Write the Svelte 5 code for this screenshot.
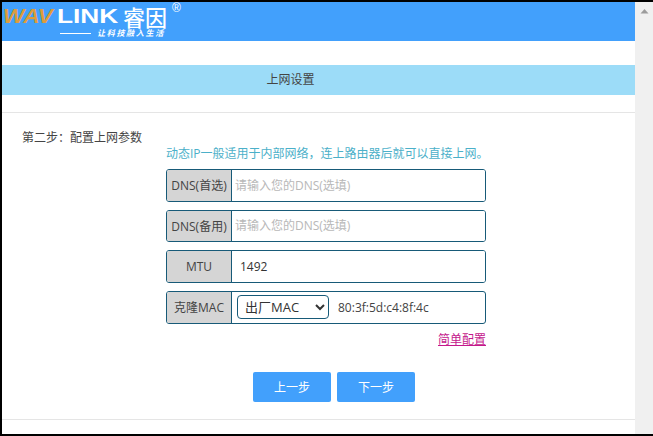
<script lang="ts">
  const fields = [
    { label: 'DNS(首选)', placeholder: '请输入您的DNS(选填)', value: '' },
    { label: 'DNS(备用)', placeholder: '请输入您的DNS(选填)', value: '' },
    { label: 'MTU', placeholder: '', value: '1492' }
  ]
</script>

<div class="frame">
  <main class="page">
    <header class="top">
      <div class="logo">
        <div class="brand"><span class="wav">WAV</span><span class="link">LINK</span><span class="cn">睿因</span><span class="reg">®</span></div>
        <div class="slogan"><span class="dash"></span><span>让科技融入生活</span></div>
      </div>
    </header>

    <div class="title">上网设置</div>

    <section class="content">
      <div class="step">第二步：配置上网参数</div>
      <div class="form">
        <p class="hint">动态IP一般适用于内部网络，连上路由器后就可以直接上网。</p>
        {#each fields as f}
          <div class="row">
            <span class="label">{f.label}</span>
            <input class="text" placeholder={f.placeholder} value={f.value} />
          </div>
        {/each}
        <div class="row">
          <span class="label">克隆MAC</span>
          <div class="mac">
            <select>
              <option>出厂MAC</option>
            </select>
            <span class="addr">80:3f:5d:c4:8f:4c</span>
          </div>
        </div>
        <div class="simple"><a href="#simple">简单配置</a></div>
      </div>
    </section>

    <div class="actions">
      <button>上一步</button>
      <button>下一步</button>
    </div>
  </main>

  <aside class="scroll">
    <svg width="9" height="6" viewBox="0 0 9 6"><path d="M0.5 5.5 4.5 1l4 4.5z" fill="#9c9c9c" /></svg>
  </aside>
</div>

<style>
  :global(body) {
    margin: 0;
    background: #fff;
  }

  .frame {
    box-sizing: border-box;
    width: 653px;
    height: 436px;
    display: flex;
    border-top: 2px solid #000;
    border-left: 2px solid #000;
    border-bottom: 2px solid #000;
    font-family: "Open Sans", "Noto Sans CJK SC", sans-serif;
    font-size: 12px;
    color: #444;
    overflow: hidden;
  }

  .page {
    width: 633px;
    flex-shrink: 0;
    display: flex;
    flex-direction: column;
  }

  .scroll {
    flex: 1;
    background: #f0f0f0;
    display: flex;
    justify-content: center;
    align-items: flex-start;
    padding-top: 6px;
  }

  .top {
    height: 39px;
    background: #42a0fc;
    flex-shrink: 0;
  }

  .logo {
    padding: 2px 0 0 1px;
    color: #fff;
  }

  .brand {
    display: flex;
    align-items: center;
    height: 24px;
    font-family: "Liberation Sans", sans-serif;
    font-weight: 700;
    font-size: 21px;
    line-height: 24px;
  }

  .wav {
    width: 54px;
    flex-shrink: 0;
    color: #dd9c3c;
    font-style: italic;
    transform: scaleX(1.08);
    transform-origin: left;
  }

  .link {
    width: 66px;
    flex-shrink: 0;
    transform: scaleX(1.25);
    transform-origin: left;
  }

  .cn {
    font-family: "Noto Sans CJK SC", sans-serif;
    font-size: 22px;
    font-weight: 500;
    white-space: nowrap;
  }

  .reg {
    align-self: flex-start;
    font-size: 12px;
    font-weight: 400;
    line-height: 12px;
    margin: -2px 0 0 5px;
  }

  .slogan {
    display: flex;
    align-items: center;
    gap: 6px;
    margin-left: 57px;
    font-family: "Noto Sans CJK SC", sans-serif;
    font-size: 8px;
    font-style: italic;
    font-weight: 700;
    letter-spacing: 1.7px;
    line-height: 10px;
  }

  .dash {
    width: 31px;
    height: 1px;
    background: #fff;
  }

  .title {
    margin-top: 24px;
    height: 30px;
    line-height: 30px;
    background: #9cdcf8;
    padding-right: 56px;
    text-align: center;
    flex-shrink: 0;
  }

  .content {
    margin-top: 17px;
    padding: 17px 0 0 20px;
    border-top: 1px solid #e5e5e5;
    display: flex;
    flex-shrink: 0;
  }

  .step {
    width: 144px;
    flex-shrink: 0;
    line-height: 15px;
  }

  .form {
    width: 320px;
    display: flex;
    flex-direction: column;
  }

  .hint {
    margin: 16px 0 8px;
    line-height: 15px;
    color: #4bb0c9;
    white-space: nowrap;
  }

  .row {
    box-sizing: border-box;
    height: 32.67px;
    margin-bottom: 8px;
    display: flex;
    flex-shrink: 0;
    border: 1px solid #175a78;
    border-radius: 3px;
    overflow: hidden;
  }

  .label {
    width: 64px;
    flex-shrink: 0;
    background: #d5d5d5;
    border-right: 1px solid #175a78;
    display: flex;
    align-items: center;
    justify-content: center;
    white-space: nowrap;
  }

  .text {
    flex: 1;
    min-width: 0;
    border: none;
    outline: none;
    padding: 0 3px;
    font: inherit;
    color: #333;
  }

  .text:not(:placeholder-shown) {
    padding-left: 8px;
  }

  .text::placeholder {
    color: #b8b8b8;
  }

  .mac {
    flex: 1;
    display: flex;
    align-items: center;
    gap: 9px;
    padding-left: 5px;
  }

  select {
    width: 92px;
    height: 24px;
    padding-left: 3px;
    border: 1px solid #175a78;
    border-radius: 4px;
    background: #fff;
    font: inherit;
    font-size: 13px;
    color: #333;
  }

  .simple {
    text-align: right;
    line-height: 15px;
  }

  .simple a {
    color: #c4188c;
  }

  .actions {
    margin-top: 25px;
    padding-left: 251px;
    display: flex;
    gap: 6px;
    height: 48px;
    border-bottom: 1px solid #e5e5e5;
    box-sizing: border-box;
    flex-shrink: 0;
  }

  button {
    width: 78px;
    height: 30px;
    border: none;
    border-radius: 2px;
    background: #42a0fc;
    color: #fff;
    font: inherit;
  }
</style>
